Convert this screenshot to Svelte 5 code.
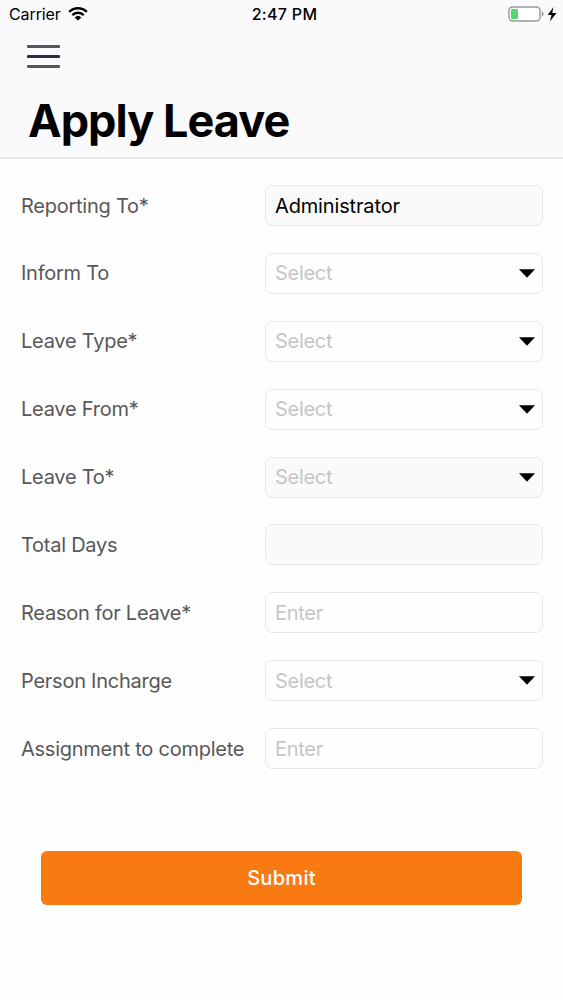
<script>
  let fields = [
    { label: 'Reporting To*', value: 'Administrator', disabled: true },
    { label: 'Inform To', hint: 'Select', arrow: true },
    { label: 'Leave Type*', hint: 'Select', arrow: true },
    { label: 'Leave From*', hint: 'Select', arrow: true },
    { label: 'Leave To*', hint: 'Select', arrow: true, disabled: true },
    { label: 'Total Days', disabled: true },
    { label: 'Reason for Leave*', hint: 'Enter' },
    { label: 'Person Incharge', hint: 'Select', arrow: true },
    { label: 'Assignment to complete', hint: 'Enter' }
  ];
</script>

<main>
  <header>
    <div class="status">
      <div class="carrier">
        <span>Carrier</span>
        <svg width="20" height="14" viewBox="0 0 20 14">
          <path d="M1.2 4.9a12.6 12.6 0 0 1 17.6 0M4.3 8.1a8.2 8.2 0 0 1 11.4 0" fill="none" stroke="#000" stroke-width="2.5" />
          <path d="M10 13.6 6.7 10.4a4.8 4.8 0 0 1 6.6 0z" />
        </svg>
      </div>
      <span class="time">2:47 PM</span>
      <div class="power">
        <svg width="49" height="16" viewBox="0 0 49 16">
          <rect x="1" y="1" width="31" height="14" rx="3.5" fill="#fff" stroke="#959a96" stroke-width="1.4" />
          <rect x="3" y="3" width="7" height="10" rx="1" fill="#53d769" />
          <path d="M33.8 5.6q1.9 .6 1.9 2.4t-1.9 2.4z" fill="#959a96" />
          <path d="M45.6 1 39.6 9h4l-1.8 6.4L48.6 7h-4.4z" />
        </svg>
      </div>
    </div>
    <button class="menu" aria-label="Menu">
      <span></span>
      <span class="mid"></span>
      <span></span>
    </button>
    <h1>Apply Leave</h1>
  </header>

  <div class="form">
    {#each fields as field}
      <div class="row">
        <span class="label">{field.label}</span>
        <div class="field" class:disabled={field.disabled}>
          {#if field.value}
            <span class="value">{field.value}</span>
          {:else if field.hint}
            <span class="hint">{field.hint}</span>
          {/if}
          {#if field.arrow}
            <svg class="arrow" width="16" height="9" viewBox="0 0 16 9">
              <path d="M0 .3h16L8 8.7z" />
            </svg>
          {/if}
        </div>
      </div>
    {/each}
  </div>

  <button class="submit">Submit</button>
</main>

<style>
  :global(body) {
    margin: 0;
    background: #fefefe;
  }

  main {
    min-height: 1000px;
    font-family: Inter, "Liberation Sans", sans-serif;
    background: #fefefe;
  }

  header {
    box-sizing: border-box;
    height: 159px;
    background: #faf9fc;
    border-bottom: 2px solid #e8e7ea;
  }

  .status {
    display: grid;
    grid-template-columns: 1fr auto 1fr;
    align-items: center;
    height: 28px;
    padding: 0 6px 0 9px;
    font-size: 16px;
    line-height: 28px;
  }

  .carrier {
    display: flex;
    align-items: center;
    gap: 7px;
  }

  .carrier span {
    letter-spacing: -0.1px;
  }

  .time {
    padding-left: 3px;
    font-weight: 500;
    letter-spacing: 0.3px;
  }

  .power {
    display: flex;
    justify-content: flex-end;
  }

  .menu {
    display: flex;
    flex-direction: column;
    gap: 7px;
    margin: 17px 0 0 27px;
    padding: 0;
    border: none;
    background: none;
  }

  .menu span {
    width: 33px;
    height: 3px;
    border-radius: 1px;
    background: #57555e;
  }

  .menu .mid {
    background: #2f2a48;
  }

  h1 {
    margin: 26px 0 0 28px;
    font-size: 45px;
    line-height: 54px;
    font-weight: 700;
    letter-spacing: -0.95px;
  }

  .form {
    display: flex;
    flex-direction: column;
    gap: 26.9px;
    padding: 26px 20px 0 21px;
  }

  .row {
    display: grid;
    grid-template-columns: 1fr 278px;
    align-items: center;
    font-size: 20px;
  }

  .label {
    color: #58575a;
    letter-spacing: -0.25px;
    white-space: nowrap;
  }

  .field {
    display: flex;
    align-items: center;
    box-sizing: border-box;
    height: 41px;
    padding: 0 7px 0 9px;
    border: 1px solid #e8e7ea;
    border-radius: 7px;
    letter-spacing: -0.15px;
  }

  .disabled {
    background: #faf9fc;
  }

  .hint {
    color: #c6c5c9;
    letter-spacing: -0.3px;
  }

  .arrow {
    margin-left: auto;
  }

  .submit {
    display: block;
    width: 481px;
    height: 54px;
    margin: 82px 0 0 41px;
    padding: 0;
    border: none;
    border-radius: 6px;
    background: #fa7a12;
    color: #fff;
    font-family: inherit;
    font-size: 20px;
    font-weight: 500;
    letter-spacing: 0.3px;
  }
</style>
